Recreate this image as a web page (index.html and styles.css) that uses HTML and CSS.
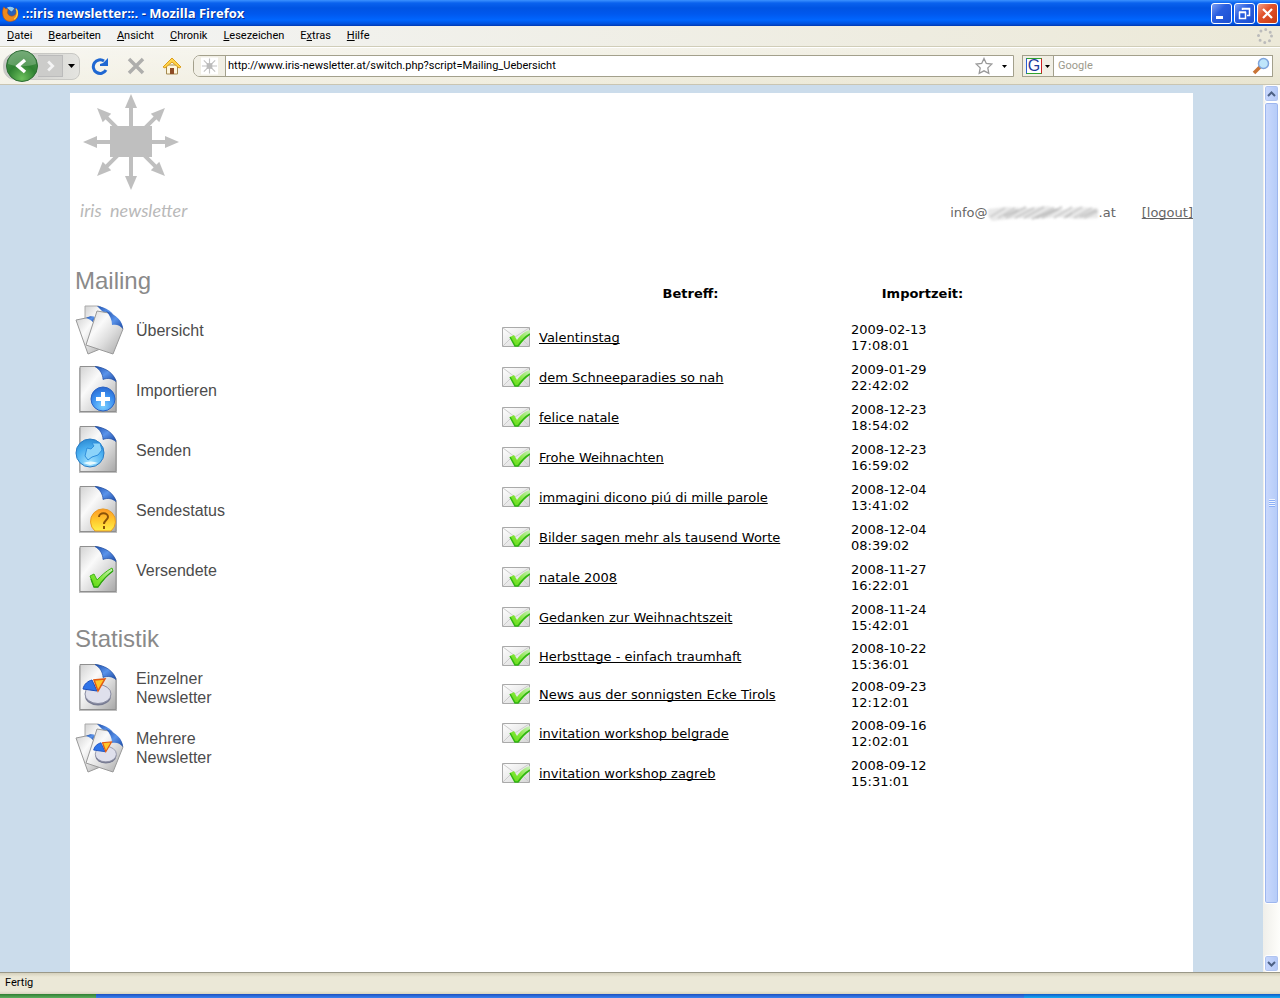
FILE: index.html
```html
<!DOCTYPE html>
<html lang="de">
<head>
<meta charset="utf-8">
<title>.::iris newsletter::.</title>
<link rel="stylesheet" href="styles.css">
</head>
<body>

<!-- shared icon shapes -->
<svg class="defs" width="0" height="0" aria-hidden="true">
<defs>
<linearGradient id="paper" x1="0" y1="0" x2="1" y2="1">
<stop offset="0" stop-color="#d2d2d2"/><stop offset=".35" stop-color="#fafafa"/><stop offset=".6" stop-color="#dedede"/><stop offset="1" stop-color="#a6a6a6"/>
</linearGradient>
<linearGradient id="fold" x1="0" y1="0" x2="1" y2="1">
<stop offset="0" stop-color="#1d4fae"/><stop offset=".5" stop-color="#5a93ea"/><stop offset="1" stop-color="#1c4aa5"/>
</linearGradient>
<radialGradient id="ballBlue" cx=".5" cy=".8" r=".8">
<stop offset="0" stop-color="#7cd0ff"/><stop offset=".6" stop-color="#3b8ff0"/><stop offset="1" stop-color="#2a68cf"/>
</radialGradient>
<radialGradient id="ballSky" cx=".5" cy=".85" r=".9">
<stop offset="0" stop-color="#a5e4ff"/><stop offset=".6" stop-color="#48aef0"/><stop offset="1" stop-color="#2a86cf"/>
</radialGradient>
<linearGradient id="ballGold" x1="0" y1="0" x2="0" y2="1">
<stop offset="0" stop-color="#ff9a26"/><stop offset=".5" stop-color="#ffc62c"/><stop offset="1" stop-color="#fff04a"/>
</linearGradient>
<linearGradient id="tick" x1="0" y1="1" x2="1" y2="0">
<stop offset="0" stop-color="#5fd60f"/><stop offset=".45" stop-color="#82e83a"/><stop offset="1" stop-color="#cdeec2"/>
</linearGradient>
<linearGradient id="envelope" x1="0" y1="0" x2="1" y2="1">
<stop offset="0" stop-color="#fff"/><stop offset="1" stop-color="#d6d6d6"/>
</linearGradient>
<radialGradient id="backBall" cx=".5" cy=".9" r=".9">
<stop offset="0" stop-color="#6cc05c"/><stop offset=".5" stop-color="#2f8232"/><stop offset="1" stop-color="#4f9453"/>
</radialGradient>
</defs>
<symbol id="sheet" viewBox="0 0 50 50">
<path d="M4 3h17l21 14v31H4z" fill="#000" opacity=".25"/>
<path d="M5 1.500h16c9 2 16 7 20 14v31H5z" fill="url(#paper)" stroke="#8f8f8f"/>
<path d="M20 1.500c5 3 8 8 8 13 5-2 9-1 13 2-2-8-10-14-21-15z" fill="url(#fold)" stroke="#2150a8" stroke-width=".7"/>
</symbol>
<symbol id="sheets" viewBox="0 0 50 50">
<path d="M10 1h13c6 2 10 6 12 11v27H10z" fill="url(#paper)" stroke="#aaa"/>
<path d="M22 1c9 1 16 6 19 13l-10-4z" fill="url(#fold)"/>
<path d="M1 15l15-3 14 30-17 7z" fill="url(#paper)" stroke="#999"/>
<path d="M11 13c3-2 7-2 9-1l-2 5c-2-2-4-3-7-4z" fill="url(#fold)"/>
<path d="M22 6l12 2c7 3 11 8 14 16L38 49l-27-9z" fill="url(#paper)" stroke="#999"/>
<path d="M31 6c4 4 6 9 6 14 4-1 8 0 11 4 0-8-7-14-17-18z" fill="url(#fold)"/>
</symbol>
<symbol id="pie" viewBox="0 0 32 30">
<ellipse cx="17" cy="19" rx="13" ry="9.500" fill="#777b92"/>
<ellipse cx="17" cy="17" rx="13" ry="9.500" fill="#dfe0ec" stroke="#8b8ea3"/>
<path d="M16 14L2 12c1-5 5-8 9-9z" fill="#2f74e8" stroke="#1a4ebc"/>
<path d="M17 14L13 3l11-1z" fill="#ffc62a" stroke="#e25b14" stroke-width="1.500"/>
</symbol>
<symbol id="check" viewBox="0 0 26 22">
<path d="M2 9l4-2 3 6C13 9 18 4 24 1l1 3C19 8 14 14 10 20H6z" fill="url(#tick)" stroke="#43b61b"/>
<path d="M3 12l3 8h4c4-6 9-12 15-16" fill="none" stroke="#2fa312" stroke-width="1.300"/>
</symbol>
<symbol id="mail" viewBox="0 0 28 20">
<path d="M.5.5h27v19H.5z" fill="url(#envelope)" stroke="#aaa"/>
<path d="M1 1l12 9L27 1M1 19l10-10M27 19l-9-9" fill="none" stroke="#ccc"/>
<path d="M8 10l4-2 3 5c3-4 6-8 13-10v5c-5 3-8 7-11 11h-4z" fill="url(#tick)"/>
<path d="M8 10l5 9h3c4-6 7-9 12-12" fill="none" stroke="#31b512" stroke-width="1.500"/>
</symbol>
<symbol id="ray" viewBox="0 0 98 98">
<path d="M47 11h4v40h-4z" fill="#bfbfbf"/><path d="M49 1l6 14H43z" fill="#bfbfbf"/>
</symbol>
</svg>

<div class="window">

<div class="titlebar">
<svg class="fox" viewBox="0 0 18 18"><circle cx="9" cy="9" r="7" fill="#2a62b8"/><path d="M5 3c3-2 7-1 8 1-2 1-1 2-3 3" fill="#8fcbf2"/><path d="M2 2c1 2 2 2 4 2 1 2-1 3 0 5 1 3 6 4 8 1 2-2 1-5 0-7 4 4 4 10 0 13C9 19 2 17 1 11 0 7 1 4 2 2z" fill="#f08a1c" stroke="#b84e10" stroke-width=".6"/><path d="M15 4c2 3 2 8-2 11" fill="none" stroke="#ffd23c" stroke-width="1.500"/></svg>
<span class="caption">.::iris newsletter::. - Mozilla Firefox</span>
<button class="winbtn" aria-label="Minimieren"><svg viewBox="0 0 19 19"><path d="M4 12h7v3H4z" fill="#fff"/></svg></button>
<button class="winbtn" aria-label="Wiederherstellen"><svg viewBox="0 0 19 19"><path d="M4.500 8.500h6v6h-6zM4 8h7M7.500 6V4.500h7v7H12M7 5h8" fill="none" stroke="#fff" stroke-width="1.500"/></svg></button>
<button class="winbtn close" aria-label="Schließen"><svg viewBox="0 0 19 19"><path d="M5 5l9 9M14 5l-9 9" stroke="#fff" stroke-width="2.200"/></svg></button>
</div>

<div class="menubar">
<button><u>D</u>atei</button>
<button><u>B</u>earbeiten</button>
<button><u>A</u>nsicht</button>
<button><u>C</u>hronik</button>
<button><u>L</u>esezeichen</button>
<button>E<u>x</u>tras</button>
<button><u>H</u>ilfe</button>
<svg class="throbber" viewBox="0 0 16 16"><circle cx="8" cy="8" r="6.500" fill="none" stroke="#bbb" stroke-width="3" stroke-linecap="round" stroke-dasharray="0 5.105"/></svg>
</div>

<div class="toolbar">
<div class="history">
<button class="back" aria-label="Zurück"><svg viewBox="0 0 32 32"><circle cx="16" cy="16" r="15.500" fill="url(#backBall)" stroke="#2c6b33"/><path d="M2 14a14 13 0 0 1 28 0c-9 3-19 3-28 0z" fill="#fff" opacity=".22"/><path d="M19 10l-7 6 7 6" fill="none" stroke="#fff" stroke-width="3.500"/></svg></button>
<button class="fwd" aria-label="Vor"><svg viewBox="0 0 24 22"><path d="M10 6l5 5-5 5" fill="none" stroke="#f4f4f4" stroke-width="3"/></svg></button>
<button class="drop" aria-label="Verlauf"><svg viewBox="0 0 7 4"><path d="M0 0h7L3.500 4z"/></svg></button>
</div>
<button class="tool" aria-label="Neu laden"><svg viewBox="0 0 18 18"><path d="M15 13A6.800 6.800 0 1 1 13 4" fill="none" stroke="#1f67d2" stroke-width="3"/><path d="M17 1v8H9V7l3-1z" fill="#1f67d2"/></svg></button>
<button class="tool" aria-label="Stopp"><svg viewBox="0 0 18 18"><path d="M2 2l14 14M16 2L2 16" stroke="#aeaeac" stroke-width="3.500"/></svg></button>
<button class="tool" aria-label="Startseite"><svg viewBox="0 0 18 18"><path d="M3.500 8h11v9h-11z" fill="#fff6dc" stroke="#a58a50"/><path d="M7 11h4v6H7z" fill="#8d4b25"/><path d="M9 1l9 9-2 1-7-6-7 6-2-1z" fill="#ffd44b" stroke="#dc9d1a"/></svg></button>
<form class="address">
<svg class="favicon" viewBox="0 0 18 18"><path d="M0 0h18v18H0z" fill="#fff"/><path d="M9 1v16M1 9h16M3 3l12 12M15 3L3 15" stroke="#c2c2c2" stroke-width="1.200"/><path d="M6 6h6v6H6z" fill="#bbb"/></svg>
<input type="text" aria-label="Adresse" value="http://www.iris-newsletter.at/switch.php?script=Mailing_Uebersicht">
<svg class="bookmark" viewBox="0 0 18 18"><path d="M9 1.500l2.300 5 5.500.6-4 3.800 1 5.400L9 13.800l-4.800 2.500 1-5.400-4-3.800 5.500-.6z" fill="#fff" stroke="#999" stroke-width="1.300"/></svg>
<svg class="caret" viewBox="0 0 5 3"><path d="M0 0h5L2.500 3z"/></svg>
</form>
<form class="search">
<button type="button" class="engine" aria-label="Suchmaschine"><span class="gicon">G</span><svg class="caret" viewBox="0 0 5 3"><path d="M0 0h5L2.500 3z"/></svg></button>
<input type="text" aria-label="Suche" placeholder="Google">
<svg class="lens" viewBox="0 0 18 18"><path d="M8 10l-6 6" stroke="#c97436" stroke-width="3.500"/><circle cx="11.500" cy="6.500" r="5" fill="#bfe6fb" stroke="#7ea4dc" stroke-width="1.500"/></svg>
</form>
</div>

<div class="viewport">
<div class="canvas">
<div class="page">

<header>
<div class="logo">
<svg viewBox="0 0 98 98"><use href="#ray"/><use href="#ray" transform="rotate(45 49 49)"/><use href="#ray" transform="rotate(90 49 49)"/><use href="#ray" transform="rotate(135 49 49)"/><use href="#ray" transform="rotate(180 49 49)"/><use href="#ray" transform="rotate(225 49 49)"/><use href="#ray" transform="rotate(270 49 49)"/><use href="#ray" transform="rotate(315 49 49)"/><path d="M28 33h42v31H28z" fill="#bfbfbf"/></svg>
<span>iris &nbsp;newsletter</span>
</div>
<div class="user">
<span>info@</span>
<svg class="smudge" viewBox="0 0 111 18" aria-hidden="true"><path d="M0 5L18 3 40 4 60 2 74 6 90 3 110 4V14L90 15 70 13 50 15 30 14 4 17 0 12z" fill="#e9e9e9"/><path d="M2 13L17 4M10 14L27 4M18 14L38 3M27 14L46 4M36 14L56 3M44 15L66 4M54 14L74 3M66 14L84 3M76 14L94 3M86 14L104 4M96 14L110 7" stroke="#ccc" stroke-width="2"/><path d="M16 12L30 6M48 14L70 5M78 13L84 9M92 13L108 6" stroke="#aaa"/></svg>
<span>.at</span>
<a class="logout" href="#">[logout]</a>
</div>
</header>

<div class="columns">
<nav>
<h2>Mailing</h2>
<a href="#"><svg viewBox="0 0 50 50"><use href="#sheets"/></svg><span>Übersicht</span></a>
<a href="#"><svg viewBox="0 0 50 50"><use href="#sheet"/><circle cx="28" cy="34" r="12" fill="url(#ballBlue)" stroke="#2a63c4"/><path d="M28 27v14M21 34h14" stroke="#fff" stroke-width="4"/></svg><span>Importieren</span></a>
<a href="#"><svg viewBox="0 0 50 50"><use href="#sheet"/><circle cx="15" cy="28" r="14" fill="url(#ballSky)" stroke="#2a7cc4"/><path d="M12 23l4 1 3-3-2-3 8 0 2 7-4 5-6 2-4 3-3-4z" fill="#8cd4fa" stroke="#2f8fdc"/><path d="M8 38q8-3 15 0l-8 2z" fill="#e8faff"/></svg><span>Senden</span></a>
<a href="#"><svg viewBox="0 0 50 50"><use href="#sheet"/><path d="M20 46a12.500 12.500 0 1 1 16 0z" fill="url(#ballGold)" stroke="#e89a22"/><path d="M24 32c0-5 9-5 9 0 0 3-4 3-4 7M29 41v3" fill="none" stroke="#8a5208" stroke-width="2"/></svg><span>Sendestatus</span></a>
<a href="#"><svg viewBox="0 0 50 50"><use href="#sheet"/><use href="#check" x="13" y="22" width="26" height="22"/></svg><span>Versendete</span></a>
<h2>Statistik</h2>
<a href="#"><svg viewBox="0 0 50 50"><use href="#sheet"/><use href="#pie" x="6" y="14" width="32" height="30"/></svg><span>Einzelner<br>Newsletter</span></a>
<a href="#"><svg viewBox="0 0 50 50"><use href="#sheets"/><use href="#pie" x="17" y="17" width="26" height="25"/></svg><span>Mehrere<br>Newsletter</span></a>
</nav>

<table>
<thead>
<tr><th class="icon"></th><th class="subject">Betreff:</th><th class="time">Importzeit:</th></tr>
</thead>
<tbody>
<tr><td><svg class="mail"><use href="#mail"/></svg></td><td><a href="#">Valentinstag</a></td><td>2009-02-13<br>17:08:01</td></tr>
<tr><td><svg class="mail"><use href="#mail"/></svg></td><td><a href="#">dem Schneeparadies so nah</a></td><td>2009-01-29<br>22:42:02</td></tr>
<tr><td><svg class="mail"><use href="#mail"/></svg></td><td><a href="#">felice natale</a></td><td>2008-12-23<br>18:54:02</td></tr>
<tr><td><svg class="mail"><use href="#mail"/></svg></td><td><a href="#">Frohe Weihnachten</a></td><td>2008-12-23<br>16:59:02</td></tr>
<tr><td><svg class="mail"><use href="#mail"/></svg></td><td><a href="#">immagini dicono piú di mille parole</a></td><td>2008-12-04<br>13:41:02</td></tr>
<tr><td><svg class="mail"><use href="#mail"/></svg></td><td><a href="#">Bilder sagen mehr als tausend Worte</a></td><td>2008-12-04<br>08:39:02</td></tr>
<tr><td><svg class="mail"><use href="#mail"/></svg></td><td><a href="#">natale 2008</a></td><td>2008-11-27<br>16:22:01</td></tr>
<tr><td><svg class="mail"><use href="#mail"/></svg></td><td><a href="#">Gedanken zur Weihnachtszeit</a></td><td>2008-11-24<br>15:42:01</td></tr>
<tr class="tight"><td><svg class="mail"><use href="#mail"/></svg></td><td><a href="#">Herbsttage - einfach traumhaft</a></td><td>2008-10-22<br>15:36:01</td></tr>
<tr class="tight"><td><svg class="mail"><use href="#mail"/></svg></td><td><a href="#">News aus der sonnigsten Ecke Tirols</a></td><td>2008-09-23<br>12:12:01</td></tr>
<tr><td><svg class="mail"><use href="#mail"/></svg></td><td><a href="#">invitation workshop belgrade</a></td><td>2008-09-16<br>12:02:01</td></tr>
<tr><td><svg class="mail"><use href="#mail"/></svg></td><td><a href="#">invitation workshop zagreb</a></td><td>2008-09-12<br>15:31:01</td></tr>
</tbody>
</table>
</div>

</div>
</div>

<div class="scrollbar">
<button aria-label="Nach oben"><svg viewBox="0 0 9 6"><path d="M1 5l3.500-3.500L8 5" fill="none" stroke="#4d6185" stroke-width="2"/></svg></button>
<div class="thumb"><i></i></div>
<div class="track"></div>
<button aria-label="Nach unten"><svg viewBox="0 0 9 6"><path d="M1 1l3.500 3.500L8 1" fill="none" stroke="#4d6185" stroke-width="2"/></svg></button>
</div>
</div>

<div class="statusbar">Fertig</div>
<div class="taskbar"><div class="start"></div><div class="tasks"></div><div class="tray"></div></div>

</div>
</body>
</html>
```
FILE: styles.css
```css
* { box-sizing: border-box; }
body {
	margin: 0;
	font-family: "DejaVu Sans", Verdana, sans-serif;
	font-size: 13px;
	line-height: 16px;
	color: #000;
}
button {
	border: 0;
	padding: 0;
	margin: 0;
	background: none;
	font: inherit;
	color: inherit;
}
input {
	border: 0;
	padding: 0;
	outline: 0;
	background: none;
	font: inherit;
	min-width: 0;
}
svg { display: block; flex: none; }
.defs { position: absolute; }
.window {
	display: flex;
	flex-direction: column;
	height: 100vh;
}

/* title bar */
.titlebar {
	display: flex;
	align-items: center;
	gap: 2px;
	height: 26px;
	flex: none;
	padding: 0 2px;
	background: linear-gradient(#3c92ff, #0a62ee 3px, #0054e3 8px, #0058ee 14px, #0066ff 20px, #0050dc 24px, #0038b0);
}
.fox { width: 17px; height: 17px; }
.caption {
	flex: 1;
	padding-left: 1px;
	font: bold 13px/18px "Open Sans", sans-serif;
	color: #fff;
	text-shadow: 1px 1px #0b2f8f;
}
.winbtn {
	width: 21px;
	height: 21px;
	border: 1px solid #fff;
	border-radius: 3px;
	background: linear-gradient(135deg, #7d9ff3, #2a5fe0 40%, #1c4fd0);
}
.winbtn.close { background: linear-gradient(135deg, #f0a08a, #e2532c 40%, #c53a12); }

/* menu */
.menubar, .toolbar, .statusbar {
	font-family: Roboto, Tahoma, sans-serif;
	font-size: 11px;
	flex: none;
}
.menubar {
	display: flex;
	align-items: center;
	gap: 16px;
	height: 21px;
	padding: 0 7px;
	background: linear-gradient(90deg, #f3f4f4, #ece9d8);
	border-bottom: 1px solid #d0cdb8;
}
.throbber { width: 16px; height: 16px; margin-left: auto; }

/* toolbar */
.toolbar {
	display: flex;
	align-items: center;
	height: 38px;
	padding: 0 7px 0 3px;
	border-top: 1px solid #fff;
	border-bottom: 1px solid #c9c5b2;
	background: linear-gradient(90deg, rgba(255,255,255,.5), rgba(255,255,255,0)), linear-gradient(#f0eee2, #e9e5d0);
}
.history {
	display: flex;
	align-items: center;
	width: 77px;
	height: 27px;
	padding-left: 2px;
	border: 1px solid #c8c8c4;
	border-radius: 12px 8px 8px 12px;
	background: linear-gradient(90deg, #c9c9c6, #e4e4e0);
}
.back svg { width: 32px; height: 32px; }
.fwd { border: 1px solid #bbb; border-left: 0; background: #ccccca; }
.fwd svg { width: 24px; height: 20px; }
.drop { padding-left: 5px; }
.drop svg { width: 7px; height: 4px; }
.tool { margin-left: 18px; }
.history + .tool { margin-left: 11px; }
.tool svg { width: 18px; height: 18px; }
.address, .search {
	display: flex;
	align-items: center;
	height: 22px;
	border: 1px solid #a3a08c;
	background: #fff;
}
.address {
	flex: 1;
	margin-left: 12px;
	border-radius: 7px 0 0 7px;
	padding-right: 6px;
}
.favicon {
	width: 32px;
	height: 20px;
	padding: 1px 7px;
	border-right: 1px solid #a3a08c;
	border-radius: 6px 0 0 6px;
	background: #f1efe5;
}
.address input { flex: 1; padding-left: 2px; }
.bookmark { width: 18px; height: 18px; }
.caret { width: 5px; height: 3px; }
.bookmark + .caret { margin-left: 9px; }
.search { width: 251px; margin-left: 8px; padding-right: 2px; }
.engine {
	display: flex;
	align-items: center;
	gap: 3px;
	height: 20px;
	width: 31px;
	padding-left: 3px;
	background: #f1efe5;
	border-right: 1px solid #a3a08c;
}
.gicon {
	width: 16px;
	height: 16px;
	border: 1px solid #2a5fd4;
	border-color: #2fa32f #c22 #2fa32f #2a5fd4;
	background: #fff;
	color: #1c3c9c;
	font: 16px/14px "Liberation Sans", sans-serif;
}
.search input { flex: 1; padding-left: 4px; }
.search input::placeholder { color: #9c9a8c; opacity: 1; }
.lens { width: 18px; height: 18px; }

/* page area */
.viewport {
	display: flex;
	flex: 1;
	min-height: 0;
	background: #cbdceb;
}
.canvas {
	display: flex;
	flex: 1;
	padding: 8px 70px 0;
	overflow: hidden;
}
.page { flex: 1; background: #fff; }
header {
	display: flex;
	justify-content: space-between;
	align-items: flex-end;
	height: 169px;
}
.logo { align-self: flex-start; padding-left: 10px; color: #b9b9b9; }
.logo svg { width: 98px; height: 98px; margin-left: 2px; }
.logo span {
	display: block;
	margin-top: 8px;
	font: italic 18px/22px Lato, sans-serif;
}
.user {
	display: flex;
	align-items: center;
	padding-bottom: 40px;
	color: #666;
}
.smudge { width: 111px; height: 18px; filter: blur(1px); }
a { color: inherit; text-decoration-skip-ink: none; }
.logout { margin-left: 26px; }
.columns { display: flex; }

/* left navigation */
nav {
	width: 430px;
	padding-left: 5px;
	font: 16px/19px "Liberation Sans", Arial, sans-serif;
	color: #4c4c4c;
}
nav h2 {
	margin: 0;
	font-size: 24px;
	font-weight: normal;
	line-height: 38px;
	color: #8a8a8a;
}
nav a + h2 { margin-top: 20px; }
nav a {
	display: flex;
	align-items: center;
	gap: 11px;
	height: 60px;
	text-decoration: none;
}
nav svg { width: 50px; height: 50px; }

/* mailing list */
table {
	align-self: flex-start;
	margin-top: 8px;
	border-collapse: collapse;
	table-layout: fixed;
	width: 494px;
}
th { height: 47px; padding: 0; }
.icon { width: 39px; }
.subject { width: 303px; }
td { height: 40px; padding: 2px 0 0; }
.tight td { height: 38px; }
td:first-child { padding: 0 0 0 2px; }
td:last-child, .time { padding-left: 9px; }
.mail { width: 28px; height: 20px; }

/* scroll bar */
.scrollbar {
	display: flex;
	flex-direction: column;
	width: 17px;
	padding: 0 1px;
	background: linear-gradient(90deg, #f0efea, #fefefb);
}
.scrollbar button {
	display: flex;
	align-items: center;
	justify-content: center;
	height: 17px;
	border: 1px solid #fff;
	border-radius: 3px;
	background: linear-gradient(90deg, #c9d8fd, #b3c8f6);
	box-shadow: inset 0 0 0 1px #b0c4f0;
}
.scrollbar button svg { width: 9px; height: 6px; }
.thumb {
	display: flex;
	align-items: center;
	justify-content: center;
	flex: 94;
	border: 1px solid #fff;
	border-radius: 3px;
	background: linear-gradient(90deg, #cbd9fd, #b4cbf8);
	box-shadow: inset 0 0 0 1px #9db6ee;
}
.thumb i {
	width: 6px;
	height: 8px;
	background: repeating-linear-gradient(#eef4fe 0 1px, #8cb0f8 1px 2px);
}
.track { flex: 6; }

/* bottom of the window */
.statusbar {
	height: 22px;
	padding: 2px 5px;
	border-top: 1px solid #9a9888;
	background: linear-gradient(#d5d1bd, #ebe8d7 4px, #ebe8d7 18px, #d8d4be);
}
.taskbar { display: flex; height: 4px; flex: none; }
.start { width: 96px; background: linear-gradient(#2f7d33, #5faf5d); }
.tasks { flex: 1; background: linear-gradient(#1c4fc0, #3c84f0); }
.tray { width: 20%; background: linear-gradient(#0e58c8, #18aef2); }
```
